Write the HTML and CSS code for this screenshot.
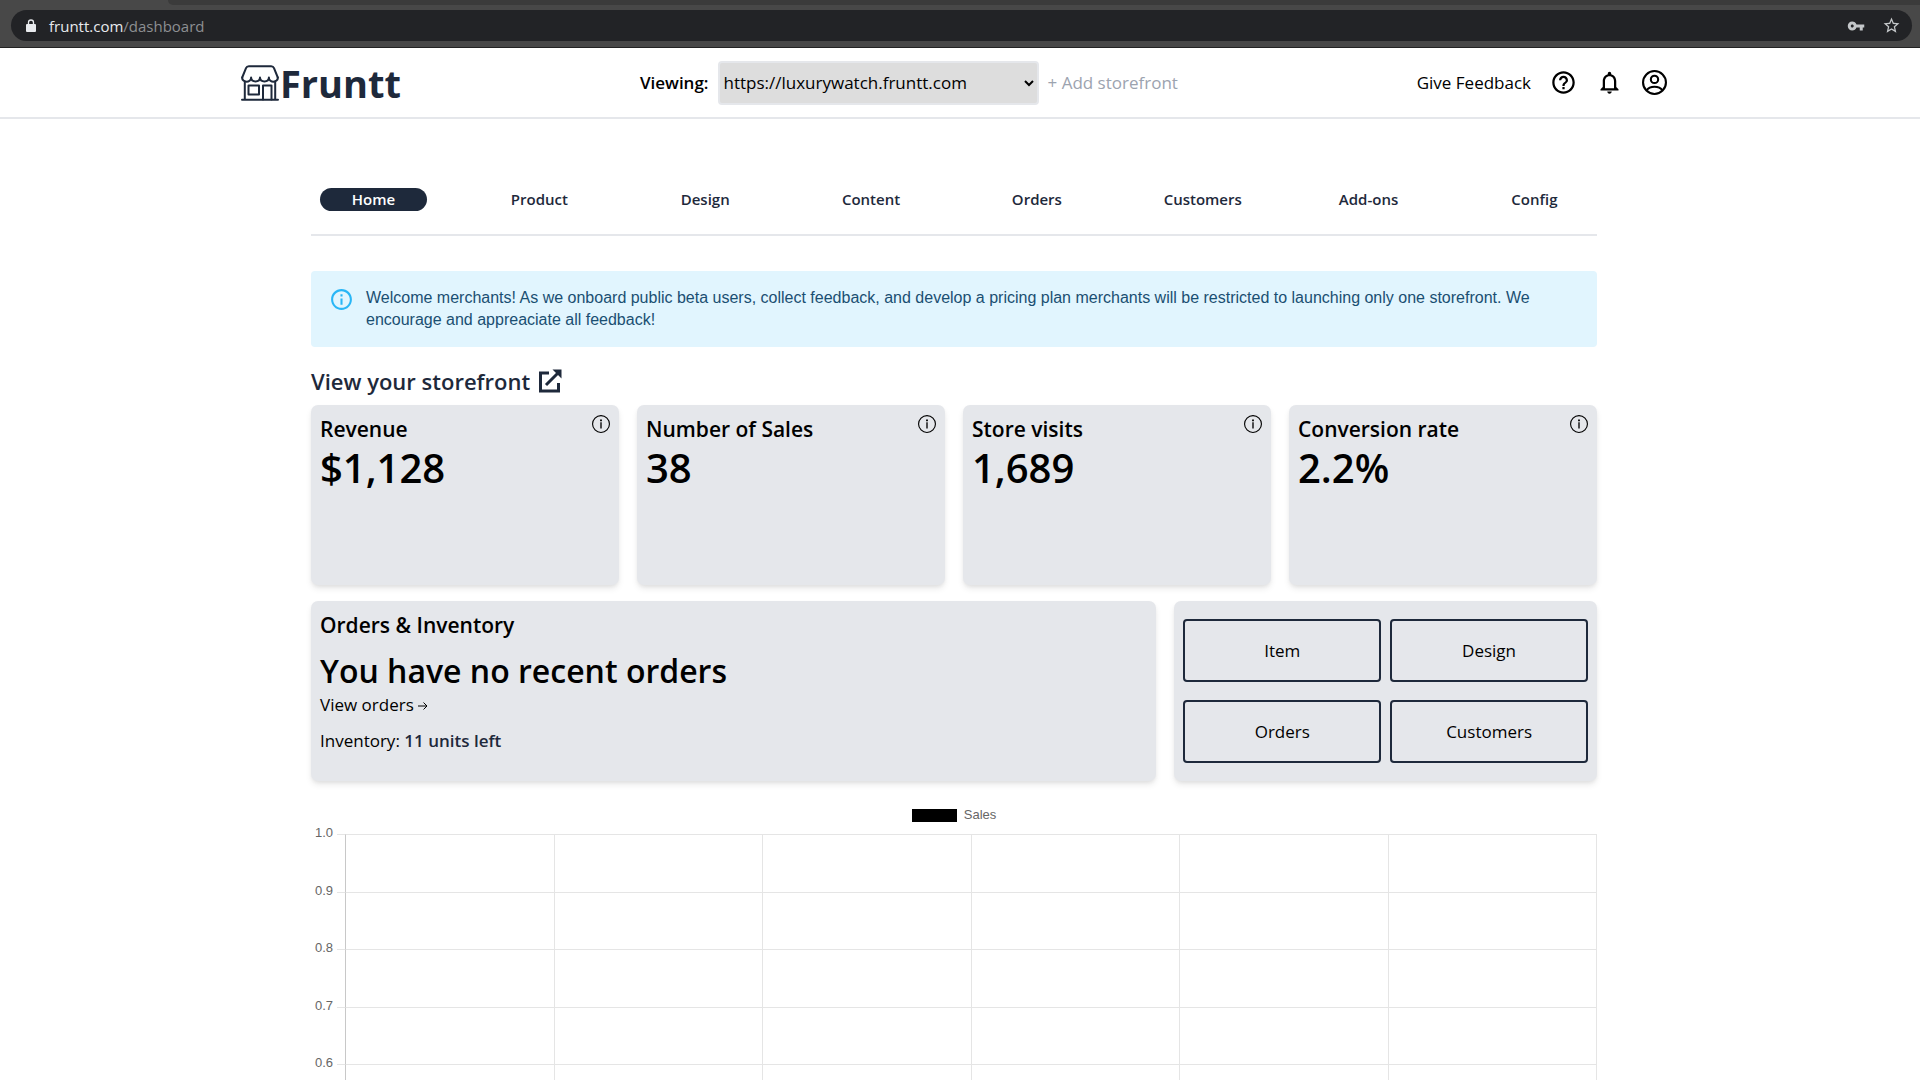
FILE: index.html
```html
<!DOCTYPE html>
<html lang="en">
<head>
    <meta charset="UTF-8">
    <meta name="viewport" content="width=device-width, initial-scale=1.0">
    <title>Fruntt</title>
    <link rel="stylesheet" href="styles.css">
</head>
<body>
    <!-- Icons used more than once -->
    <svg width="0" height="0" class="sprite" aria-hidden="true">
        <symbol id="info" viewBox="0 0 24 24">
            <path fill="currentColor" d="M11 7h2v2h-2zm0 4h2v6h-2zm1-9C6.48 2 2 6.48 2 12s4.48 10 10 10 10-4.48 10-10S17.52 2 12 2zm0 18c-4.41 0-8-3.59-8-8s3.59-8 8-8 8 3.59 8 8-3.59 8-8 8z"/>
        </symbol>
        <symbol id="info-thin" viewBox="0 0 16 16">
            <path fill="currentColor" d="M8 15A7 7 0 1 1 8 1a7 7 0 0 1 0 14zm0 1A8 8 0 1 0 8 0a8 8 0 0 0 0 16z"/>
            <path fill="currentColor" d="M7.4 6.5h1.2V12H7.4zM7.2 4h1.6v1.5H7.2z"/>
        </symbol>
    </svg>

    <div class="browser">
        <div class="tab-strip"></div>
        <div class="address-bar">
            <svg class="lock" width="10" height="13" viewBox="0 0 10 13">
                <path d="M2.5 6V3.5a2.5 2.5 0 0 1 5 0V6" fill="none" stroke="#e8eaed" stroke-width="1.3"/>
                <rect x="0" y="5" width="10" height="8" rx="1" fill="#e8eaed"/>
            </svg>
            <span class="url">fruntt.com<span class="url-path">/dashboard</span></span>
            <svg class="key" width="18" height="18" viewBox="0 0 24 24">
                <path fill="#c4c7c9" d="M12.65 10C11.83 7.67 9.61 6 7 6c-3.31 0-6 2.69-6 6s2.69 6 6 6c2.61 0 4.83-1.67 5.65-4H17v4h4v-4h2v-4H12.65zM7 14c-1.1 0-2-.9-2-2s.9-2 2-2 2 .9 2 2-.9 2-2 2z"/>
            </svg>
            <svg class="star" width="19" height="19" viewBox="0 0 24 24">
                <path fill="#c4c7c9" d="M22 9.24l-7.19-.62L12 2 9.19 8.63 2 9.24l5.46 4.73L5.82 21 12 17.27 18.18 21l-1.63-7.03L22 9.24zM12 15.4l-3.76 2.27 1-4.28-3.32-2.88 4.38-.38L12 6.1l1.71 4.04 4.38.38-3.32 2.88 1 4.28L12 15.4z"/>
            </svg>
        </div>
    </div>

    <header class="site-header">
        <div class="header-inner">
            <a class="logo" href="#">
                <svg width="38" height="36" viewBox="0 0 38 36" fill="none" stroke="#1e293b" stroke-width="2" stroke-linecap="round" stroke-linejoin="round">
                    <path d="M1.2 12.5 5 3.2c.5-1.3 1.4-2 2.8-2h22.4c1.4 0 2.3.7 2.8 2l3.8 9.3"/>
                    <path d="M1.2 12.5c-.4 5.5 8.8 5.5 8.9 0 .2 5.2 8.7 5.2 8.9 0 .2 5.2 8.7 5.2 8.9 0 .1 5.5 9.3 5.5 8.900 0"/>
                    <path d="M3.8 17v17.5M34.2 17v17.5M1 34.7h36"/>
                    <rect x="7.5" y="20.5" width="10.5" height="9"/>
                    <path d="M22 34.5V20.5h8.5v14"/>
                </svg>
                <span>Fruntt</span>
            </a>
            <div class="viewing">
                <label for="storefront">Viewing:</label>
                <select id="storefront">
                    <option>https://luxurywatch.fruntt.com</option>
                </select>
                <a class="add-store" href="#">+ Add storefront</a>
            </div>
            <div class="header-actions">
                <a href="#">Give Feedback</a>
                <button class="icon-button" aria-label="Help">
                    <svg width="27" height="27" viewBox="0 0 24 24"><path d="M11 18h2v-2h-2v2zm1-16C6.48 2 2 6.48 2 12s4.48 10 10 10 10-4.48 10-10S17.52 2 12 2zm0 18c-4.41 0-8-3.59-8-8s3.59-8 8-8 8 3.59 8 8-3.59 8-8 8zm0-14c-2.21 0-4 1.79-4 4h2c0-1.1.9-2 2-2s2 .9 2 2c0 2-3 1.75-3 5h2c0-2.25 3-2.5 3-5 0-2.21-1.79-4-4-4z"/></svg>
                </button>
                <button class="icon-button" aria-label="Notifications">
                    <svg width="27" height="27" viewBox="0 0 24 24"><path d="M12 22c1.1 0 2-.9 2-2h-4c0 1.1.9 2 2 2zm6-6v-5c0-3.07-1.63-5.64-4.5-6.32V4c0-.83-.67-1.5-1.5-1.5s-1.5.67-1.5 1.5v.68C7.64 5.36 6 7.92 6 11v5l-2 2v1h16v-1l-2-2zm-2 1H8v-6c0-2.48 1.51-4.5 4-4.5s4 2.02 4 4.5v6z"/></svg>
                </button>
                <button class="icon-button" aria-label="Account">
                    <svg width="25" height="25" viewBox="0 0 24 24" fill="none" stroke="#000" stroke-width="2"><circle cx="12" cy="12" r="11"/><circle cx="12" cy="9" r="3.5"/><path d="M4.5 19.5c1.5-2.4 4.5-3.5 7.5-3.5s6 1.1 7.5 3.5"/></svg>
                </button>
            </div>
        </div>
    </header>

    <main class="page">
        <div class="container">
            <nav class="tabs">
                <a class="active" href="#">Home</a>
                <a href="#">Product</a>
                <a href="#">Design</a>
                <a href="#">Content</a>
                <a href="#">Orders</a>
                <a href="#">Customers</a>
                <a href="#">Add-ons</a>
                <a href="#">Config</a>
            </nav>

            <div class="alert">
                <svg width="25" height="25"><use href="#info"/></svg>
                <p>Welcome merchants! As we onboard public beta users, collect feedback, and develop a pricing plan merchants will be restricted to launching only one storefront. We encourage and appreaciate all feedback!</p>
            </div>

            <a class="view-storefront" href="#">
                View your storefront
                <svg width="24" height="24" viewBox="0 0 24 24" fill="none" stroke="#1e293b" stroke-width="3">
                    <path d="M11 4H2.5v18h18v-8M8 16 20 4"/>
                    <path d="M14.5.5h9v9z" fill="#1e293b" stroke="none"/>
                </svg>
            </a>

            <section class="stats">
                <div class="card">
                    <div><h2>Revenue</h2><p class="value">$1,128</p></div>
                    <svg width="18" height="18"><use href="#info-thin"/></svg>
                </div>
                <div class="card">
                    <div><h2>Number of Sales</h2><p class="value">38</p></div>
                    <svg width="18" height="18"><use href="#info-thin"/></svg>
                </div>
                <div class="card">
                    <div><h2>Store visits</h2><p class="value">1,689</p></div>
                    <svg width="18" height="18"><use href="#info-thin"/></svg>
                </div>
                <div class="card">
                    <div><h2>Conversion rate</h2><p class="value">2.2%</p></div>
                    <svg width="18" height="18"><use href="#info-thin"/></svg>
                </div>
            </section>

            <section class="overview">
                <div class="card orders">
                    <h2>Orders &amp; Inventory</h2>
                    <h3>You have no recent orders</h3>
                    <a href="#">View orders
                        <svg width="10" height="10" viewBox="0 0 10 10" fill="none" stroke="#000"><path d="M0 5h9M5.5 1.5 9 5 5.5 8.5"/></svg>
                    </a>
                    <p>Inventory: <span class="units">11 units left</span></p>
                </div>
                <div class="card shortcuts">
                    <button>Item</button>
                    <button>Design</button>
                    <button>Orders</button>
                    <button>Customers</button>
                </div>
            </section>

            <section class="chart">
                <div class="legend"><span class="swatch"></span>Sales</div>
                <div class="plot">
                    <div class="row"><span>1.0</span><b></b><i></i><i></i><i></i><i></i><i></i><i></i></div>
                    <div class="row"><span>0.9</span><b></b><i></i><i></i><i></i><i></i><i></i><i></i></div>
                    <div class="row"><span>0.8</span><b></b><i></i><i></i><i></i><i></i><i></i><i></i></div>
                    <div class="row"><span>0.7</span><b></b><i></i><i></i><i></i><i></i><i></i><i></i></div>
                    <div class="row"><span>0.6</span><b></b><i></i><i></i><i></i><i></i><i></i><i></i></div>
                </div>
            </section>
        </div>
    </main>
</body>
</html>
```
FILE: styles.css
```css
* {
    box-sizing: border-box;
}

body {
    margin: 0;
    height: 100vh;
    overflow: hidden;
    background-color: #fff;
    color: #000;
    font-family: "Open Sans", sans-serif;
    font-size: 17px;
    line-height: 26px;
}

h2, h3, p {
    margin: 0;
}

a {
    color: inherit;
    text-decoration: none;
}

button {
    font: inherit;
    color: inherit;
    background: none;
    cursor: pointer;
}

svg {
    flex-shrink: 0;
}

.sprite {
    position: absolute;
}

/* browser bar */
.browser {
    height: 48px;
    background-color: #484848;
    border-bottom: 1px solid #232323;
}

.tab-strip {
    height: 5px;
    margin-left: 168px;
    background-color: #3b3b3b;
    border-bottom-left-radius: 6px;
}

.address-bar {
    display: flex;
    align-items: center;
    height: 31px;
    margin: 5px 8px 0 11px;
    padding: 0 11px 0 15px;
    border-radius: 16px;
    background-color: #222326;
}

.url {
    flex: 1;
    margin-left: 13px;
    color: #e8eaed;
    font-size: 15px;
}

.url-path {
    color: #8d8f92;
}

.star {
    margin-left: 17px;
}

.site-header {
    padding-right: 12px;
    border-bottom: 2px solid #e5e7eb;
}

.header-inner {
    display: flex;
    align-items: center;
    justify-content: space-between;
    max-width: 1426px;
    height: 69px;
    margin: 0 auto;
}

.logo {
    display: flex;
    align-items: center;
    gap: 1px;
    color: #1e293b;
    font-size: 38px;
    font-weight: 700;
}

.viewing {
    display: flex;
    align-items: center;
    gap: 9px;
}

.viewing label {
    font-weight: 600;
}

.viewing select {
    width: 321px;
    height: 44px;
    border: 2px solid #e5e7eb;
    border-radius: 4px;
    background-color: #ddd;
    color: #000;
    font: inherit;
}

.add-store {
    color: #9ca3af;
}

.header-actions {
    display: flex;
    align-items: center;
    gap: 19px;
}

.icon-button {
    display: flex;
    padding: 0;
    border: none;
}

/* page */
.page {
    padding-right: 12px;
}

.container {
    max-width: 1286px;
    margin: 0 auto;
}

.tabs {
    display: flex;
    justify-content: space-between;
    padding: 69px 9px 23px;
    border-bottom: 2px solid #e5e7eb;
}

.tabs a {
    width: 107px;
    border-radius: 12px;
    color: #1e293b;
    font-size: 15px;
    font-weight: 600;
    line-height: 23px;
    text-align: center;
}

.tabs a.active {
    background-color: #1e293b;
    color: #fff;
}

.alert {
    display: flex;
    gap: 12px;
    margin-top: 35px;
    padding: 16px 18px;
    border-radius: 4px;
    background-color: #e1f5fe;
    color: #1a4f72;
}

.alert svg {
    color: #29b6f6;
}

.alert p {
    font-family: "Liberation Sans", sans-serif;
    font-size: 16px;
    line-height: 22px;
}

.view-storefront {
    display: flex;
    align-items: center;
    gap: 8px;
    width: fit-content;
    margin: 18px 0 8px;
    color: #1e293b;
    font-size: 22px;
    font-weight: 600;
    line-height: 32px;
}

.card {
    min-height: 180px;
    padding: 8px 9px;
    border-radius: 7px;
    background-color: #e5e7eb;
    box-shadow: 0 4px 7px -1px rgba(0, 0, 0, 0.1), 0 2px 4px -1px rgba(0, 0, 0, 0.06);
}

.card h2 {
    font-size: 21px;
    font-weight: 600;
    line-height: 32px;
}

.stats {
    display: grid;
    grid-template-columns: repeat(4, 1fr);
    gap: 18px;
}

.stats .card {
    display: flex;
    justify-content: space-between;
}

.stats svg {
    margin-top: 2px;
}

.value {
    font-size: 40px;
    font-weight: 600;
    line-height: 46px;
}

.overview {
    display: grid;
    grid-template-columns: 2fr 1fr;
    gap: 18px;
    margin-top: 16px;
}

.orders h3 {
    margin-top: 9px;
    font-size: 32px;
    font-weight: 600;
    line-height: 42px;
}

.orders p {
    margin-top: 10px;
}

.units {
    color: #1e293b;
    font-weight: 600;
}

.shortcuts {
    display: grid;
    grid-template-columns: 1fr 1fr;
    gap: 18px 9px;
    padding: 18px 9px;
}

.shortcuts button {
    border: 2px solid #1e293b;
    border-radius: 4px;
}

/* sales chart */
.chart {
    margin-top: 25px;
    color: #666;
    font-family: "Liberation Sans", sans-serif;
    font-size: 13px;
}

.legend {
    display: flex;
    align-items: center;
    justify-content: center;
    gap: 7px;
    height: 18px;
    margin-bottom: 10px;
}

.swatch {
    width: 45px;
    height: 13px;
    background-color: #000;
}

.plot {
    display: grid;
    grid-template-rows: repeat(5, 1fr);
    height: 288px;
}

.row {
    display: grid;
    grid-template-columns: 26px 8px repeat(6, 1fr);
    border-right: 1px solid #e5e5e5;
}

.row span {
    margin-top: -14px;
    padding-left: 4px;
}

.row b {
    border-top: 1px solid #e5e5e5;
}

.row i {
    border-top: 1px solid #e5e5e5;
    border-left: 1px solid #e5e5e5;
}

.row b + i {
    border-left-color: #c8c8c8;
}
```
